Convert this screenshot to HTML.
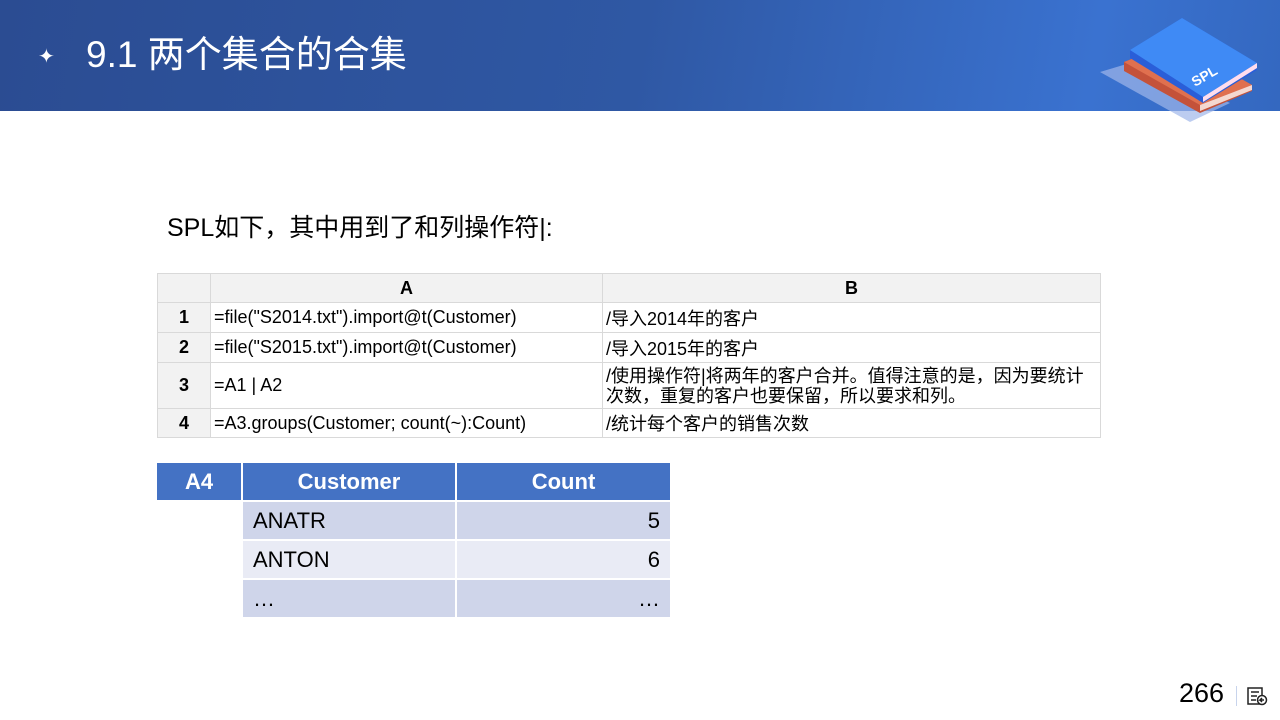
<!DOCTYPE html>
<html><head><meta charset="utf-8"><style>
body{margin:0;width:1280px;height:720px;position:relative;overflow:hidden;background:#fff;font-family:"Liberation Sans","Noto Sans CJK SC",sans-serif;}
.hdr{position:absolute;left:0;top:0;width:1280px;height:111px;background:linear-gradient(100deg,#2b4c92 0%,#2f58a4 50%,#3a72d0 85%,#3468c0 100%);}
.t{position:absolute;left:86px;top:30px;color:#fff;font-size:37px;line-height:50px;}
.star{position:absolute;left:38px;top:44px;color:#fff;font-size:20px;}
.sub{position:absolute;left:167px;top:208px;font-size:25px;color:#000;}
table{border-collapse:collapse;position:absolute;}
.g td{border:1px solid #d9d9d9;font-size:18px;padding:0 3px;color:#000;}
.g .h{background:#f2f2f2;font-weight:bold;text-align:center;}
.r td{border:2px solid #fff;font-size:22px;padding:0 10px;color:#000;}
.r .hd{background:#4472c4;color:#fff;font-weight:bold;text-align:center;}
</style></head><body>
<div class="hdr"></div>
<div class="star">✦</div>
<div class="t">9.1 两个集合的合集</div>
<svg style="position:absolute;left:1100px;top:15px" width="160" height="110">
<polygon points="0,57 40,45 130,88 90,107" fill="#9fb6ea" opacity="0.7"/>
<polygon points="24,47 76,27 152,70 152,76 100,98 24,56" fill="#c4523a"/>
<polygon points="24,47 76,27 152,70 100,90" fill="#e0704f"/>
<polygon points="100,90 152,70 152,75 100,96" fill="#f5d8d0"/>
<polygon points="30,35 82,3 157,48 157,55 103,88 30,43" fill="#2a5ed8"/>
<polygon points="30,35 82,3 157,48 103,82" fill="#3f8af5"/>
<polygon points="103,82 157,48 157,53 103,87" fill="#fde"/>
<text x="95" y="72" fill="#fff" font-size="14" font-weight="bold" transform="rotate(-30 95 72)">SPL</text>
</svg>
<div class="sub">SPL如下，其中用到了和列操作符|:</div>
<table class="g" style="left:157px;top:273px;width:944px">
<tr style="height:29px"><td class="h" style="width:46px"></td><td class="h" style="width:385px">A</td><td class="h">B</td></tr>
<tr style="height:30px"><td class="h">1</td><td>=file("S2014.txt").import@t(Customer)</td><td>/导入2014年的客户</td></tr>
<tr style="height:30px"><td class="h">2</td><td>=file("S2015.txt").import@t(Customer)</td><td>/导入2015年的客户</td></tr>
<tr style="height:46px"><td class="h">3</td><td>=A1 | A2</td><td style="line-height:20px">/使用操作符|将两年的客户合并。值得注意的是，因为要统计次数，重复的客户也要保留，所以要求和列。</td></tr>
<tr style="height:29px"><td class="h">4</td><td>=A3.groups(Customer; count(~):Count)</td><td>/统计每个客户的销售次数</td></tr>
</table>
<table class="r" style="left:155px;top:461px;width:517px">
<tr style="height:39px"><td class="hd" style="width:64px">A4</td><td class="hd" style="width:192px">Customer</td><td class="hd">Count</td></tr>
<tr style="height:39px"><td style="border:none"></td><td style="background:#cfd5ea">ANATR</td><td style="background:#cfd5ea;text-align:right">5</td></tr>
<tr style="height:39px"><td style="border:none"></td><td style="background:#e9ebf5">ANTON</td><td style="background:#e9ebf5;text-align:right">6</td></tr>
<tr style="height:39px"><td style="border:none"></td><td style="background:#cfd5ea">…</td><td style="background:#cfd5ea;text-align:right">…</td></tr>
</table>
<div style="position:absolute;left:1179px;top:678px;font-size:27px;color:#000">266</div>
<div style="position:absolute;left:1236px;top:686px;width:1px;height:20px;background:#c8d4ec"></div>
<svg style="position:absolute;left:1246px;top:685px" width="22" height="22" viewBox="0 0 22 22" fill="none" stroke="#222" stroke-width="1.5">
<rect x="2" y="3" width="14" height="16"/><path d="M5 7h8M5 11h6M5 15h5"/><circle cx="16" cy="15" r="4.5" fill="#fff"/><path d="M18 15h-4l2-2M14 15l2 2"/></svg>
</body></html>
